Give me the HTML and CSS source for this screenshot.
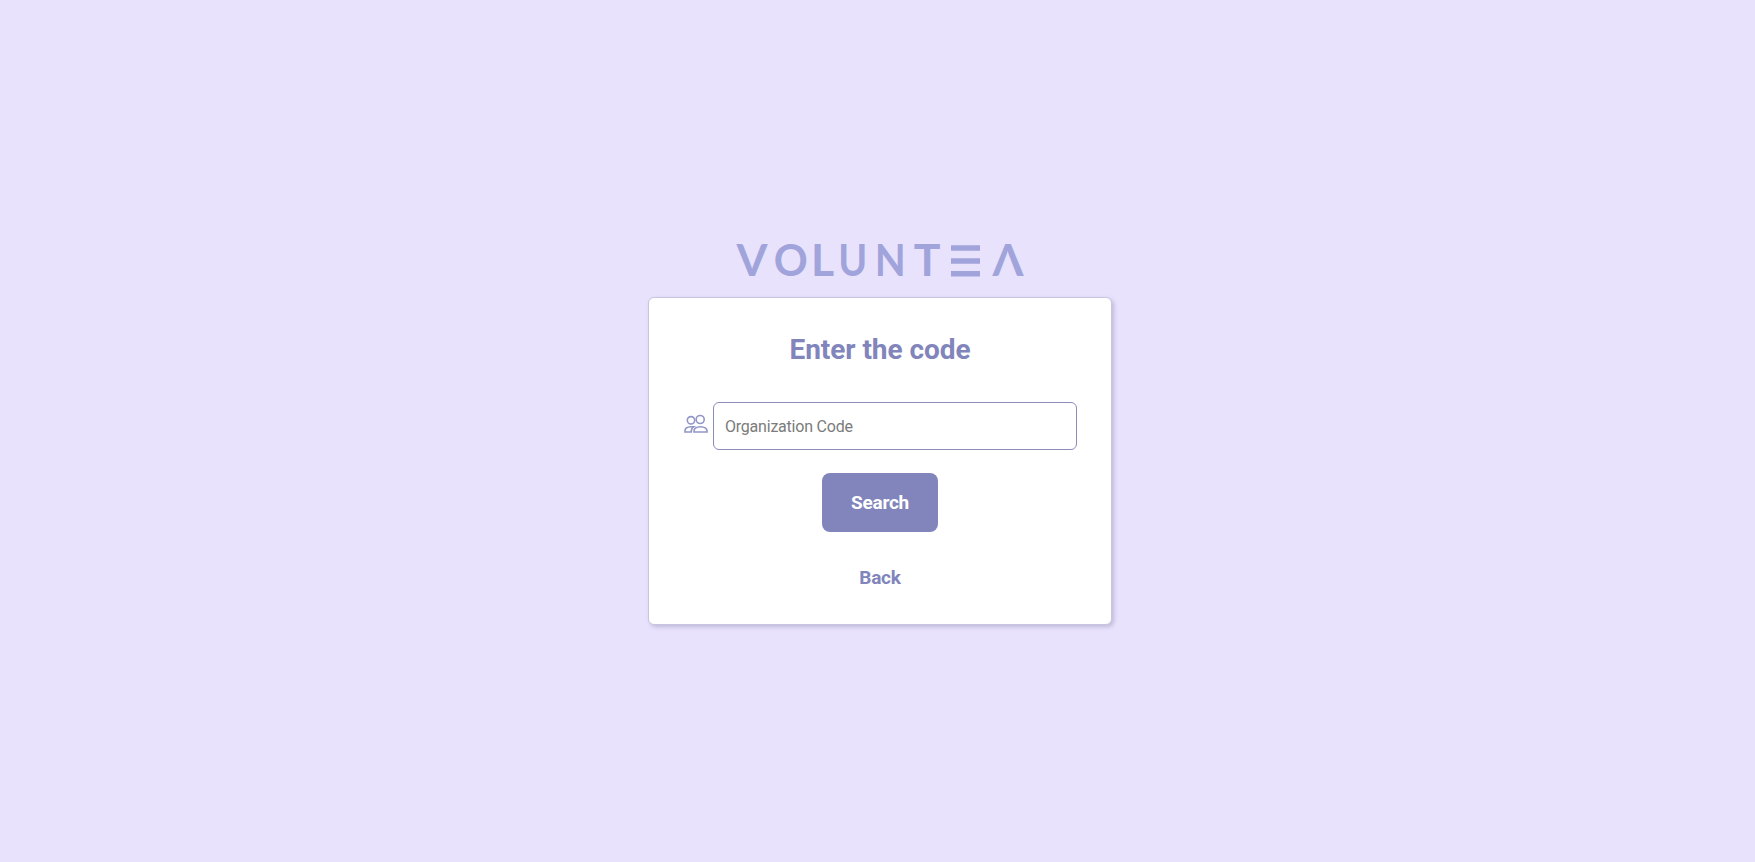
FILE: index.html
```html
<!DOCTYPE html>
<html lang="en">
<head>
<meta charset="utf-8">
<title>Voluntea</title>
<link rel="stylesheet" href="styles.css">
</head>
<body>
<main class="page">
  <svg class="logo" width="300" height="60" viewBox="-4 -10 300 60" role="img" aria-label="Voluntea">
    <g class="logo-letters">
      <text x="18" y="36" textLength="31" lengthAdjust="spacingAndGlyphs">V</text>
      <text x="56.700" y="36" textLength="34" lengthAdjust="spacingAndGlyphs">O</text>
      <text x="88.500" y="36">L</text>
      <text x="118.700" y="36" textLength="29" lengthAdjust="spacingAndGlyphs">U</text>
      <text x="156.200" y="36" textLength="31" lengthAdjust="spacingAndGlyphs">N</text>
      <text x="193.200" y="36">T</text>
      <text x="274" y="36" textLength="31" lengthAdjust="spacingAndGlyphs">Λ</text>
    </g>
    <path class="logo-bars" d="M217 8h29M217 21h29M217 33.700h29"/>
  </svg>
  <form class="card">
    <h1 class="title">Enter the code</h1>
    <div class="field">
      <svg class="people" width="24" height="20" viewBox="0 0 24 20">
        <circle cx="7" cy="6.300" r="3.700"/>
        <circle cx="16.200" cy="5.500" r="4"/>
        <path d="M10 18v-1.200q0-1.600 1.400-2.700Q13.200 12.700 16.500 12.700T21.600 14.100Q23 15.200 23 16.800V18ZM7.200 18H1v-1.400q0-3.500 5.800-3.800h2.700Q7.200 14.300 7.200 18Z"/>
      </svg>
      <input class="code" type="text" placeholder="Organization Code">
    </div>
    <button class="search" type="button">Search</button>
    <a class="back">Back</a>
  </form>
</main>
</body>
</html>
```
FILE: styles.css
```css
body {
  margin: 0;
  background: #e8e2fd;
  font-family: Roboto, sans-serif;
}
.page {
  display: flex;
  flex-direction: column;
  align-items: center;
  box-sizing: border-box;
  min-height: 862px;
  padding: 230px 0 0 5px;
}
.logo {
  display: block;
  margin-bottom: 7px;
  overflow: visible;
}
.logo-letters {
  fill: #a0a4da;
  font: 700 44.5px Lato, sans-serif;
  text-anchor: middle;
}
.logo-bars {
  stroke: #a0a4da;
  stroke-width: 5.5;
}
.card {
  display: flex;
  flex-direction: column;
  align-items: center;
  box-sizing: border-box;
  width: 464px;
  height: 328px;
  padding: 35px 34px 0;
  background: #fff;
  border: 1px solid #c9c5e0;
  border-radius: 6px;
  box-shadow: 2px 2px 4px #bfbad8;
}
.title {
  margin: 0 0 36px;
  color: #8185bb;
  font-size: 28px;
  line-height: 33px;
  font-weight: 700;
  letter-spacing: -0.05px;
}
.field {
  display: flex;
  align-items: center;
  gap: 5px;
  width: 393px;
  margin: 0 0 23px 1px;
}
.people {
  flex: none;
  margin-bottom: 5px;
  fill: none;
  stroke: #9296c6;
  stroke-width: 1.6;
}
.code {
  flex: 1;
  min-width: 0;
  box-sizing: border-box;
  height: 48px;
  padding: 1px 11px 0;
  border: 1px solid #8c8cba;
  border-radius: 6px;
  background: #fff;
  font: 16px Roboto, sans-serif;
  letter-spacing: -0.22px;
}
.code::placeholder {
  color: #7b7b7b;
}
.search {
  width: 116px;
  height: 59px;
  padding: 0;
  border: 0;
  border-radius: 8px;
  background: #8185bb;
  color: #fff;
  font: 700 19px Roboto, sans-serif;
  letter-spacing: -0.25px;
}
.back {
  margin-top: 35px;
  color: #8185bb;
  font-size: 19px;
  line-height: 22px;
  font-weight: 700;
  letter-spacing: -0.25px;
}
```
